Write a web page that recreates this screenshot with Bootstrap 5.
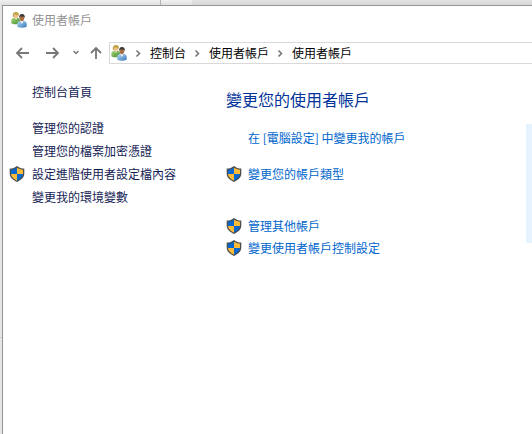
<!DOCTYPE html>
<html lang="zh-Hant">
<head>
<meta charset="utf-8">
<meta name="viewport" content="width=device-width, initial-scale=1">
<title>使用者帳戶</title>
<link rel="stylesheet" href="https://cdn.jsdelivr.net/npm/bootstrap@5.3.0/dist/css/bootstrap.min.css">
<style>
body { font: 12px/22px "Noto Sans CJK TC", sans-serif; background: #e6e6e6; color: #000; }
.desk-top { height: 5px; background: linear-gradient(#f0f0f0, #e0e0e0); }
.desk-tab { width: 161px; border-right: 1px solid #b4b4b4; }
.desk-gap { width: 31px; }
.desk-rest { background: linear-gradient(#e4e4e4, #d6d6d6); }
.desk-left { width: 2px; padding-top: 332px; }
.desk-left hr { border-color: #888; }
.app-window { border-left: 1px solid #949494; border-top: 1px solid #949494; min-width: 0; }
.title-bar { height: 28px; padding-left: 8px; gap: 5px; color: #929292; }
.nav-bar { padding: 8px 0 0 10px; }
.tool-btn { line-height: 0; height: 22px; width: 30px; }
.tool-btn.recent { width: 16px; }
.tool-btn.up { width: 20px; }
.address { height: 22px; border: 1px solid #d9d9d9; border-right: 0; padding-left: 1px; }
.crumb { color: #000; text-decoration: none; white-space: nowrap; }
.sep { width: 23px; height: 16px; }
.side { width: 223px; padding: 16px 0 0 6px; line-height: 23px; }
.home-link { margin-bottom: 13px; }
.task { display: grid; grid-template-columns: 16px auto; column-gap: 7px; align-items: center; justify-content: start; }
.task a { grid-column: 2; text-decoration: none; white-space: nowrap; }
.task svg { grid-column: 1; grid-row: 1; }
.side a { color: #151c55; }
.main-pane { padding-top: 23px; min-width: 0; }
.main-pane h1 { font-size: 16px; line-height: 24px; color: #003399; margin-bottom: 16px; }
.main-pane .task { column-gap: 6px; }
.main-pane a { color: #0066cc; }
.first { margin-bottom: 14px; }
.second { margin-bottom: 30px; }
.account-tile { width: 6px; height: 119px; margin-top: 60px; background: #e5f3ff; }
a:hover { text-decoration: underline !important; }
</style>
<script src="https://cdn.jsdelivr.net/npm/bootstrap@5.3.0/dist/js/bootstrap.bundle.min.js"></script>
</head>
<body class="d-flex flex-column min-vh-100">
<svg width="0" height="0" class="position-absolute" aria-hidden="true">
  <defs>
    <linearGradient id="green" x2="1" y2="1"><stop stop-color="#a9d67c"/><stop offset="1" stop-color="#3f8a2c"/></linearGradient>
    <linearGradient id="blue" x2="1" y2="1"><stop stop-color="#b9daf5"/><stop offset="1" stop-color="#3577b8"/></linearGradient>
    <clipPath id="shieldClip"><path d="M8 1.8C9.8 3 12 3.6 14 3.7V7.6c0 3.2-2.5 5.3-6 7.1-3.5-1.8-6-3.9-6-7.1V3.7C4 3.6 6.2 3 8 1.8z"/></clipPath>
    <symbol id="users" viewBox="0 0 16 16">
      <path d="M.4 11.4V8.2C.5 6.5 2 6 3.4 5.8h3.2c1.6.2 2.3 1.3 2.4 2.6v3.2Q4.500 13.200.4 11.4z" fill="url(#green)"/>
      <path d="M3.700 5.600 5 8l1.400-2.400z" fill="#f5eee0"/>
      <ellipse cx="4.900" cy="3.600" rx="2.200" ry="2.700" fill="#f0c08c"/>
      <path d="M1.900 4.900C1.300 1.300 3 .1 5.100.1c2.200 0 3.300 1.500 2.700 4.400L7 3.200C5.300 3.300 3.800 2.700 3.300 2.300L2.900 4.900z" fill="#c3a44a"/>
      <path d="M6.200 14.800v-3c0-1.700 1.500-2.500 3-2.700h3.400c1.900.2 3 1.300 3.100 2.900v2.800q-4.700 1.900-9.500 0z" fill="url(#blue)"/>
      <path d="M9.200 9 11 12l1.300-3z" fill="#f3f7fb"/>
      <ellipse cx="10.900" cy="6.300" rx="2.200" ry="3" fill="#a96f43"/>
      <path d="M8.300 6.600C7.600 3.600 9 2.100 11 2.100c2.200 0 3.300 1.600 2.700 4.500l-.7-1.900c-1.700.3-3-.2-3.800-.5z" fill="#3b3835"/>
    </symbol>
    <symbol id="shield" viewBox="0 0 16 16">
      <path d="M8 0c2 1.700 4.500 2.500 7.300 2.600v5c0 4-3.200 6.500-7.300 8.400C3.900 14.100.7 11.600.7 7.600v-5C3.500 2.500 6 1.700 8 0z" fill="#4b4f52"/>
      <g clip-path="url(#shieldClip)"><path d="M0 0h8v8H0zM8 8h8v8H8z" fill="#0868cf"/><path d="M8 0h8v8H8zM0 8h8v8H0z" fill="#fdbb38"/></g>
    </symbol>
    <symbol id="chevron" viewBox="0 0 23 16"><path d="m9.500 5.500 3 3-3 3" fill="none" stroke="#777" stroke-width="1.600"/></symbol>
  </defs>
</svg>
<div class="desk-top d-flex"><div class="desk-tab"></div><div class="desk-gap"></div><div class="desk-rest flex-fill"></div></div>
<div class="d-flex flex-grow-1 overflow-hidden">
  <div class="desk-left flex-shrink-0"><hr class="m-0"></div>
  <div class="app-window bg-white flex-fill">
    <header class="title-bar d-flex align-items-center"><svg width="16" height="16" aria-hidden="true"><use href="#users"/></svg><span>使用者帳戶</span></header>
    <nav class="nav-bar d-flex align-items-center" aria-label="位址">
      <button type="button" class="tool-btn btn p-0 border-0 rounded-0 text-start" aria-label="上一頁"><svg width="20" height="16" fill="none" stroke="#777" stroke-width="1.800"><path d="M16 8H4m5-5L4 8l5 5"/></svg></button>
      <button type="button" class="tool-btn btn p-0 border-0 rounded-0 text-start" aria-label="下一頁"><svg width="20" height="16" fill="none" stroke="#777" stroke-width="1.800"><path d="M3 8h12M10 3l5 5-5 5"/></svg></button>
      <button type="button" class="tool-btn recent btn p-0 border-0 rounded-0 text-start" aria-label="最近的位置"><svg width="12" height="16" fill="none" stroke="#777" stroke-width="1.500"><path d="m.5 6 2.500 2.500L5.500 6"/></svg></button>
      <button type="button" class="tool-btn up btn p-0 border-0 rounded-0 text-start" aria-label="上一層"><svg width="16" height="16" fill="none" stroke="#777" stroke-width="1.800"><path d="M7 14V3M2 8l5-5 5 5"/></svg></button>
      <div class="address d-flex align-items-center flex-fill">
        <svg class="flex-shrink-0" width="16" height="16" aria-hidden="true"><use href="#users"/></svg>
        <svg class="sep flex-shrink-0" aria-hidden="true"><use href="#chevron"/></svg><a class="crumb" href="#">控制台</a>
        <svg class="sep flex-shrink-0" aria-hidden="true"><use href="#chevron"/></svg><a class="crumb" href="#">使用者帳戶</a>
        <svg class="sep flex-shrink-0" aria-hidden="true"><use href="#chevron"/></svg><a class="crumb" href="#" aria-current="page">使用者帳戶</a>
      </div>
    </nav>
    <div class="d-flex">
      <aside class="side flex-shrink-0">
        <div class="task home-link"><a href="#">控制台首頁</a></div>
        <div class="task"><a href="#">管理您的認證</a></div>
        <div class="task"><a href="#">管理您的檔案加密憑證</a></div>
        <div class="task"><svg width="16" height="16" aria-hidden="true"><use href="#shield"/></svg><a href="#">設定進階使用者設定檔內容</a></div>
        <div class="task"><a href="#">變更我的環境變數</a></div>
      </aside>
      <main class="main-pane flex-fill">
        <h1 class="fw-normal">變更您的使用者帳戶</h1>
        <div class="task first"><a href="#">在 [電腦設定] 中變更我的帳戶</a></div>
        <div class="task second"><svg width="16" height="16" aria-hidden="true"><use href="#shield"/></svg><a href="#">變更您的帳戶類型</a></div>
        <div class="task"><svg width="16" height="16" aria-hidden="true"><use href="#shield"/></svg><a href="#">管理其他帳戶</a></div>
        <div class="task"><svg width="16" height="16" aria-hidden="true"><use href="#shield"/></svg><a href="#">變更使用者帳戶控制設定</a></div>
      </main>
      <div class="account-tile flex-shrink-0"></div>
    </div>
  </div>
</div>
</body>
</html>
